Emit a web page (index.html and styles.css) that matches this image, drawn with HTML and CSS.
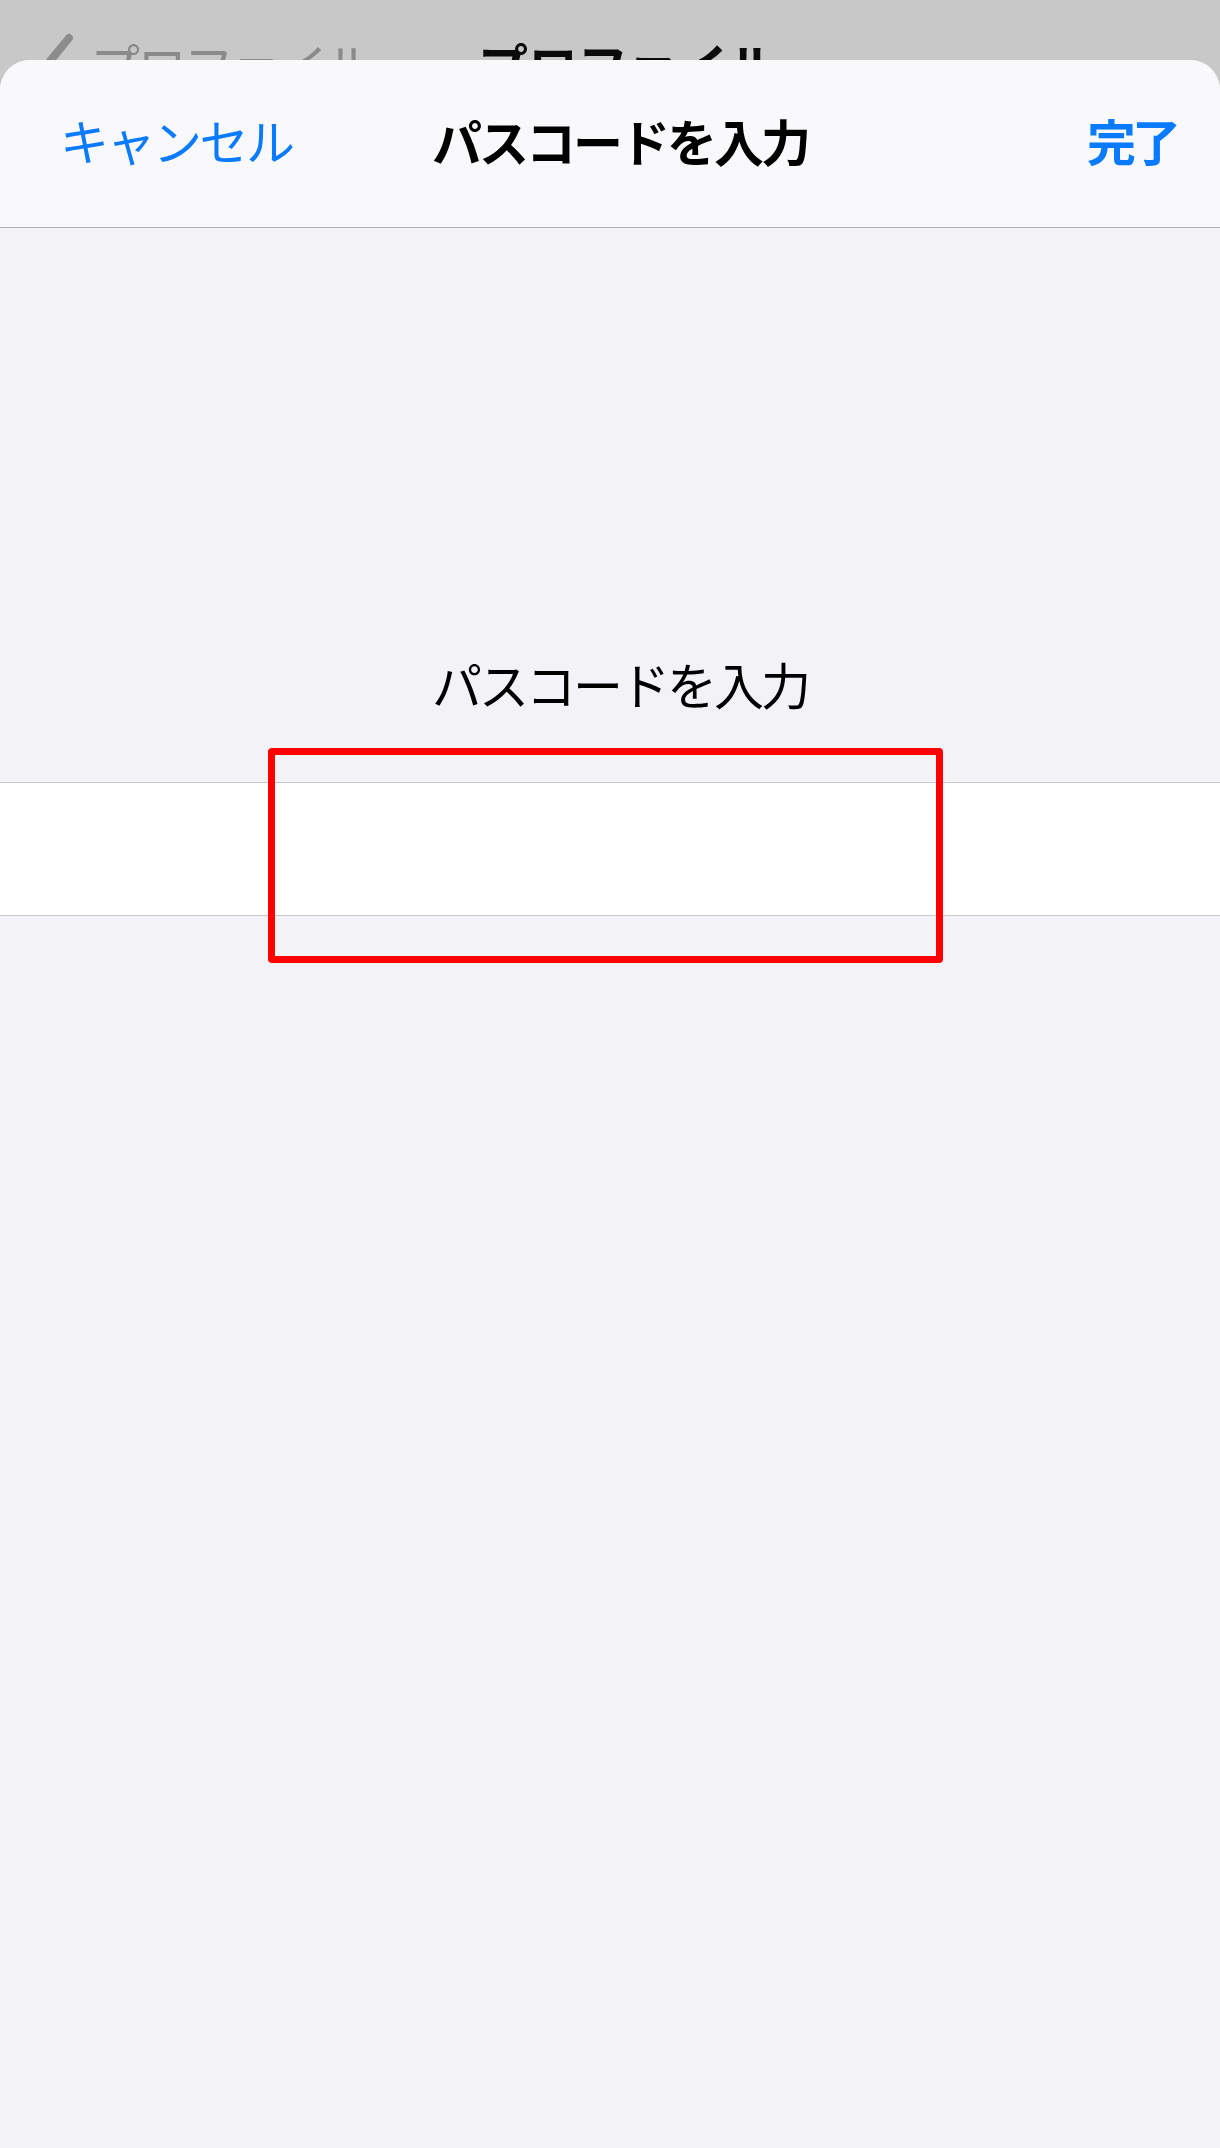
FILE: index.html
```html
<!DOCTYPE html>
<html lang="ja">
<head>
<meta charset="utf-8">
<title>パスコードを入力</title>
<link rel="stylesheet" href="styles.css">
</head>
<body>
<div class="parent-bar">
  <div class="back">
    <svg class="chev" width="34" height="60" viewBox="0 0 34 60"><path d="M29 6 L6 34 L29 62" fill="none" stroke="#8c8c8c" stroke-width="8" stroke-linecap="round" stroke-linejoin="round"/></svg>
    <span class="back-text">プロファイル</span>
  </div>
  <div class="parent-title">プロファイル</div>
</div>
<div class="sheet">
  <header class="nav">
    <span class="nav-btn cancel">キャンセル</span>
    <span class="nav-title">パスコードを入力</span>
    <span class="nav-btn done">完了</span>
  </header>
  <main class="content">
    <div class="section-label">パスコードを入力</div>
    <div class="field-row"></div>
    <div class="highlight"></div>
  </main>
</div>
</body>
</html>
```
FILE: styles.css
```css
html, body {
  margin: 0;
  padding: 0;
}
body {
  background: #c8c8c8;
  font-family: "Noto Sans CJK JP", "Noto Sans", sans-serif;
  width: 1220px;
  height: 2148px;
  overflow: hidden;
}
.parent-bar {
  height: 60px;
  overflow: hidden;
  position: relative;
}
.back {
  position: absolute;
  left: 40px;
  top: 32px;
  display: flex;
  align-items: flex-start;
}
.chev {
  display: block;
}
.back-text {
  margin-left: 16px;
  margin-top: 2px;
  font-size: 50px;
  line-height: 60px;
  color: #8a8a8a;
  letter-spacing: -3px;
}
.parent-title {
  position: absolute;
  left: 478px;
  top: 34px;
  font-size: 50px;
  line-height: 60px;
  font-weight: 700;
  color: #0a0a0a;
}
.sheet {
  height: 2088px;
  background: #f2f2f7;
  border-radius: 30px 30px 0 0;
  overflow: hidden;
  position: relative;
}
.nav {
  height: 159px;
  padding: 0 43px 8px 60px;
  background: #f9f9fb;
  border-bottom: 1.5px solid #b1b1b3;
  display: flex;
  align-items: center;
  justify-content: space-between;
  position: relative;
}
.nav-btn {
  font-size: 49px;
  line-height: 60px;
  color: #0a7aff;
}
.cancel {
  letter-spacing: -2.5px;
}
.done {
  font-weight: 700;
  letter-spacing: -4px;
}
.nav-title {
  position: absolute;
  left: 432px;
  top: 50px;
  font-size: 50px;
  line-height: 60px;
  font-weight: 700;
  color: #000;
  letter-spacing: -3px;
}
.content {
  position: relative;
  padding-top: 425px;
}
.section-label {
  margin-left: 432px;
  font-size: 50px;
  line-height: 60px;
  color: #000;
  letter-spacing: -3px;
}
.field-row {
  margin-top: 69px;
  height: 132px;
  background: #fefefe;
  border-top: 1.5px solid #c8c7cc;
  border-bottom: 1.5px solid #c8c7cc;
}
.highlight {
  position: absolute;
  left: 268px;
  top: 520px;
  width: 661px;
  height: 201px;
  border: 7px solid #ff0000;
  border-radius: 4px;
}
```
